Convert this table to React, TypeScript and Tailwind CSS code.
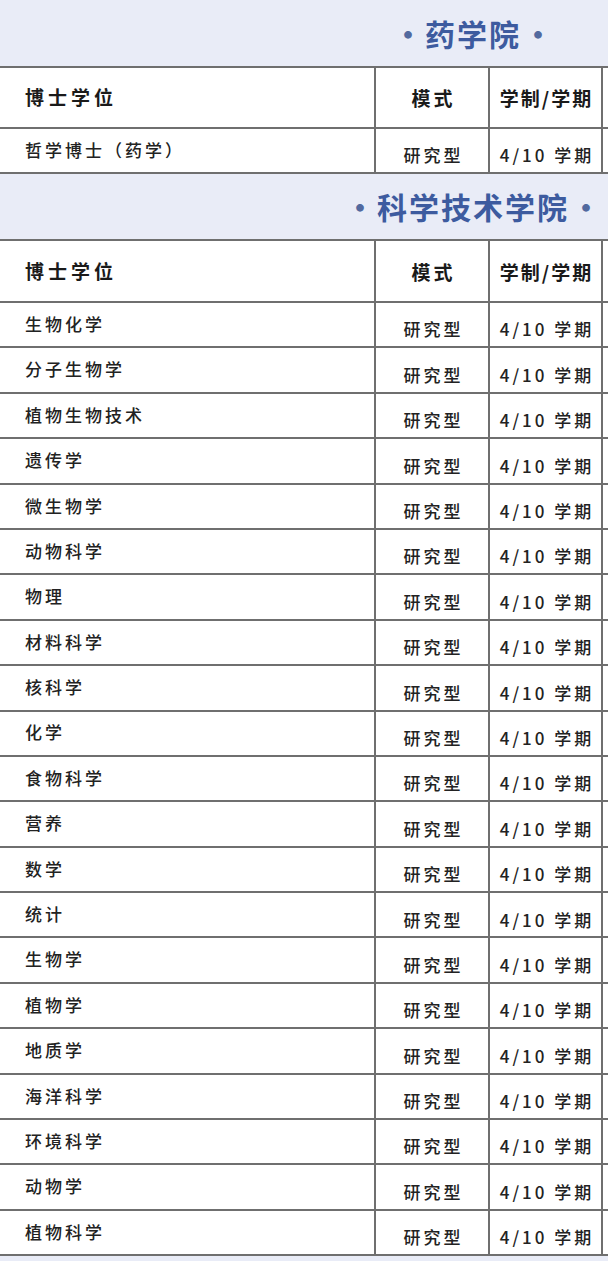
import React from "react";

const font = { fontFamily: '"Noto Sans CJK SC", "Noto Sans", sans-serif' };

const sci = [
  "生物化学",
  "分子生物学",
  "植物生物技术",
  "遗传学",
  "微生物学",
  "动物科学",
  "物理",
  "材料科学",
  "核科学",
  "化学",
  "食物科学",
  "营养",
  "数学",
  "统计",
  "生物学",
  "植物学",
  "地质学",
  "海洋科学",
  "环境科学",
  "动物学",
  "植物科学",
];

function Band({ title, h }: { title: string; h: string }) {
  return (
    <div className={`${h} flex items-center justify-center bg-[#e9ecf7] pl-[338px]`}>
      <div className="flex items-center text-[30px] font-bold text-[#3d5b9f]">
        <span className="inline-block w-[34px] text-center text-[#52699f]">·</span>
        <span className="tracking-[2px]">{title}</span>
        <span className="inline-block w-[34px] text-center text-[#52699f]">·</span>
      </div>
    </div>
  );
}

const line = "border-[#6f6f6f]";

function HeaderRow({ h }: { h: string }) {
  return (
    <div className={`${h} grid grid-cols-[376px_114px_113px_1fr] border-b-2 ${line} bg-white`}>
      <div className={`flex items-center border-r-2 ${line} pl-[25px] text-[19px] font-bold tracking-[4px] text-[#1a1a1a]`}>
        博士学位
      </div>
      <div className={`flex items-center justify-center border-r-2 ${line} pl-[3px] pt-[2px] text-[19px] font-bold tracking-[3px] text-[#1a1a1a]`}>
        模式
      </div>
      <div className={`flex items-center justify-center border-r-2 ${line} pl-[2px] pt-[2px] text-[19px] font-bold tracking-[2px] text-[#1a1a1a]`}>
        学制/学期
      </div>
      <div className="bg-white" />
    </div>
  );
}

function DataRow({ name, h }: { name: string; h: string }) {
  return (
    <div className={`${h} grid grid-cols-[376px_114px_113px_1fr] border-b-2 ${line} bg-white`}>
      <div className={`flex items-center border-r-2 ${line} pb-[2px] pl-[25px] text-[17px] font-medium tracking-[3px] text-[#222]`}>
        {name}
      </div>
      <div className={`flex items-center justify-center border-r-2 ${line} pl-[3px] pt-[9px] text-[17px] font-medium tracking-[3px] text-[#222]`}>
        研究型
      </div>
      <div className={`flex items-center justify-center border-r-2 ${line} pl-[3px] pt-[9px] text-[17px] font-medium tracking-[3px] text-[#222]`}>
        4/10 学期
      </div>
      <div className="bg-white" />
    </div>
  );
}

export default function App() {
  return (
    <div className="h-[1261px] w-[608px] overflow-hidden bg-[#e9ecf7]" style={font}>
      <Band title="药学院" h="h-[66px]" />
      <div className={`border-t-2 ${line}`}>
        <HeaderRow h="h-[61px]" />
        <DataRow name="哲学博士（药学）" h="h-[45px]" />
      </div>
      <Band title="科学技术学院" h="h-[65px]" />
      <div className={`border-t-2 ${line}`}>
        <HeaderRow h="h-[62px]" />
        {sci.map((s) => (
          <DataRow key={s} name={s} h="h-[45.4px]" />
        ))}
      </div>
    </div>
  );
}
